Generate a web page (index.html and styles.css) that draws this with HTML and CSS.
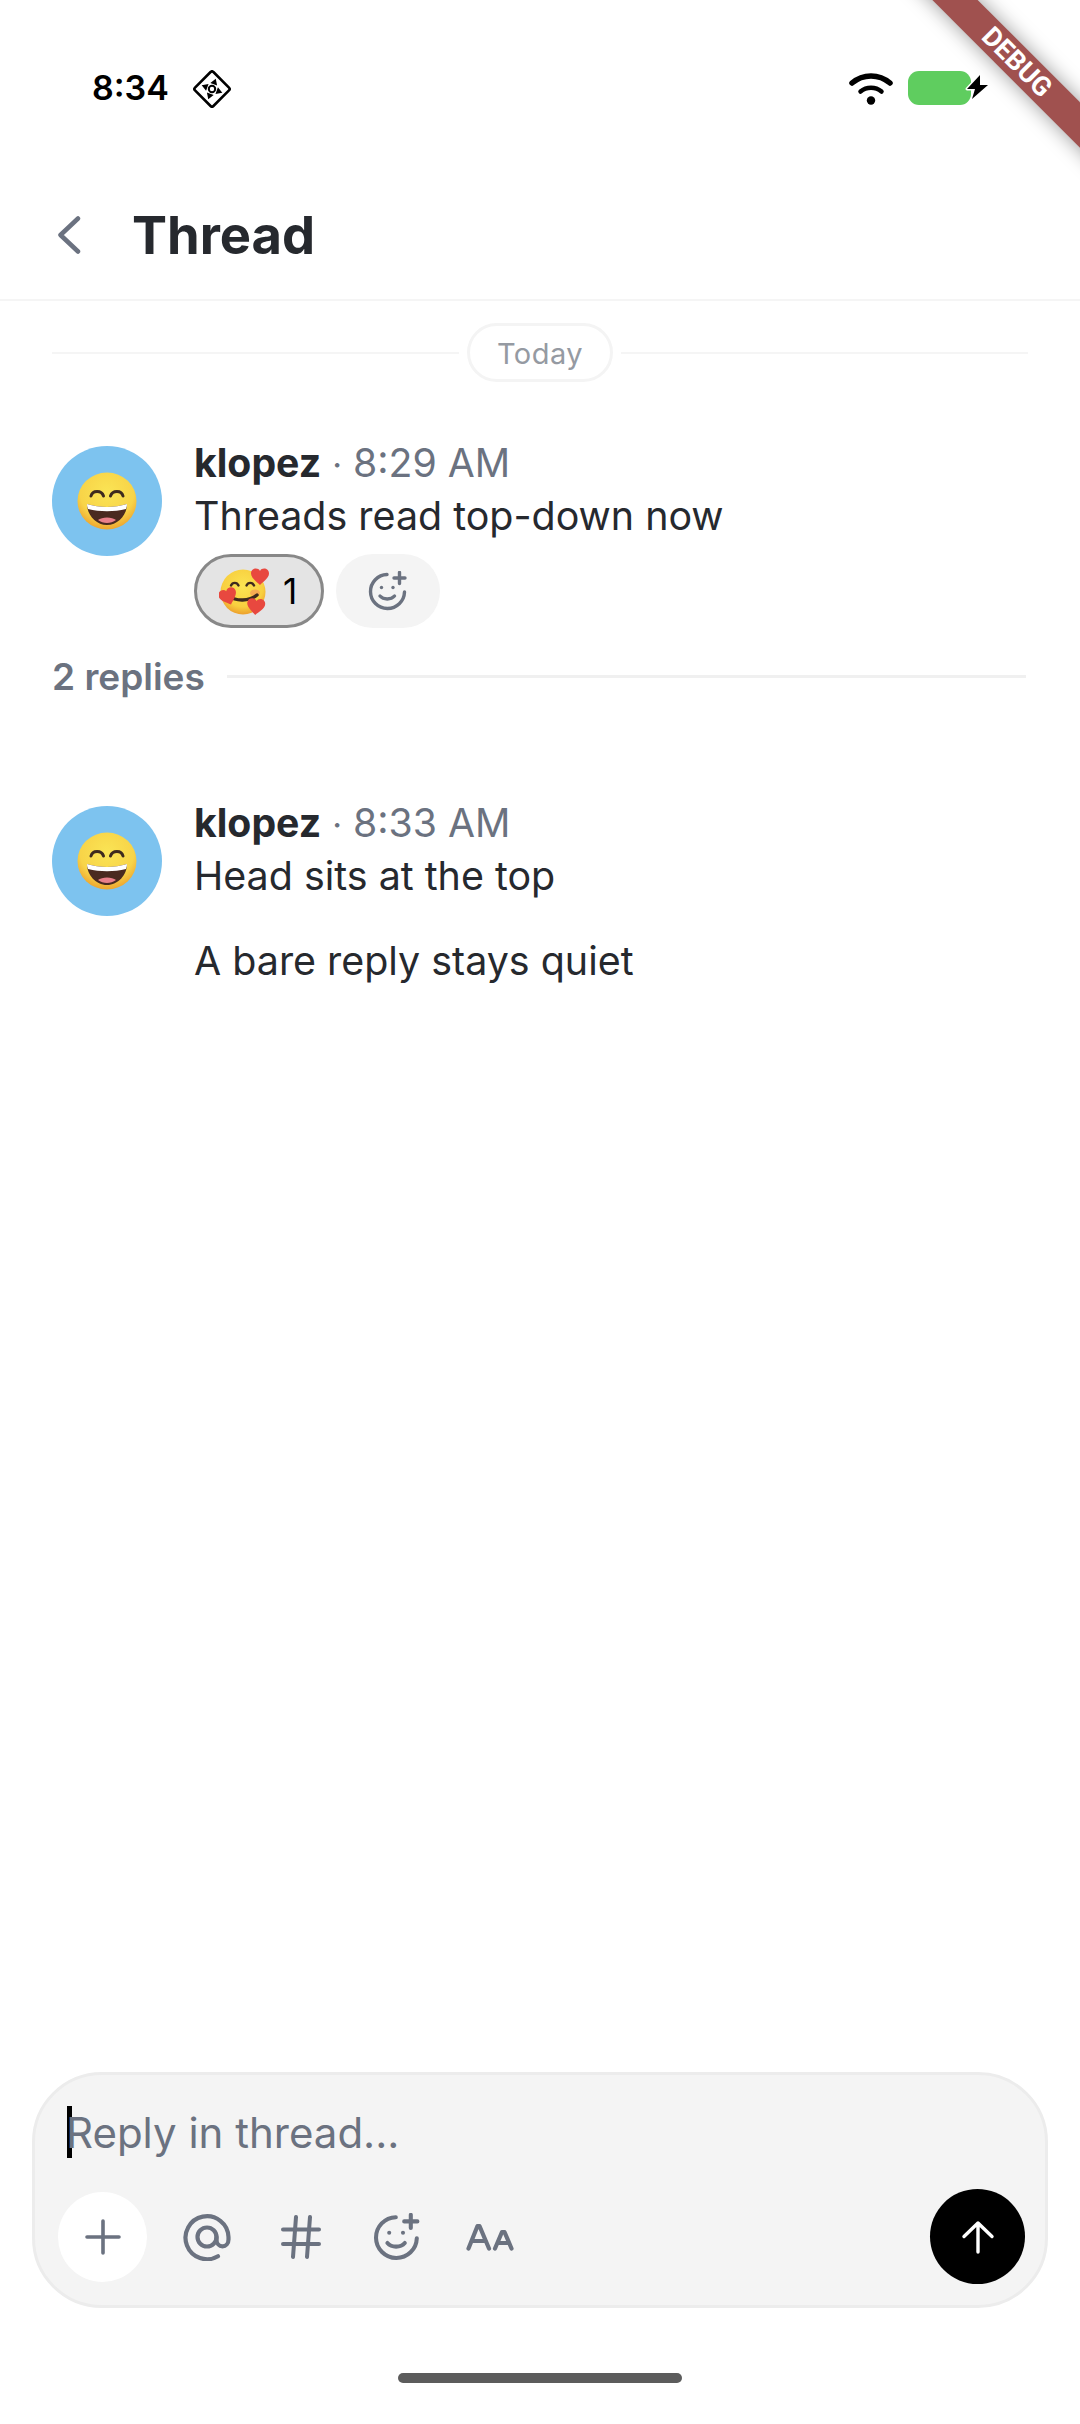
FILE: index.html
```html
<!DOCTYPE html>
<html>
    <head>
        <title>Thread</title>
        <link rel="stylesheet" href="styles.css">
    </head>
    <body>
        <div class="phone">
            <!-- Status bar -->
            <div class="status_bar">
                <span class="clock">8:34</span>
                <svg class="status_badge" viewBox="0 0 38 38" width="38" height="38">
                    <rect x="6" y="6" width="26" height="26" rx="2" transform="rotate(45 19 19)" fill="none" stroke="#000" stroke-width="2.600"/>
                    <path d="M19 8l3.600 6h-7.200zM19 30l-3.600-6h7.200zM8 19l6-3.600v7.200zM30 19l-6 3.600v-7.200z" fill="#000" transform="rotate(20 19 19)"/>
                    <circle cx="19" cy="19" r="3.200" fill="none" stroke="#000" stroke-width="2"/>
                </svg>
                <div class="status_right">
                    <svg class="wifi" viewBox="0 0 44 33" width="44" height="33">
                        <path d="M3 11C14 1.500 30 1.500 41 11" fill="none" stroke="#000" stroke-width="5.500" stroke-linecap="round"/>
                        <path d="M11.500 19.500C17.500 14.500 26.500 14.500 32.500 19.500" fill="none" stroke="#000" stroke-width="4.500" stroke-linecap="round"/>
                        <circle cx="22" cy="28.500" r="4.200" fill="#000"/>
                    </svg>
                    <div class="battery">
                        <svg class="bolt" viewBox="0 0 28 32" width="28" height="32">
                            <path d="M17 2L4 16h8l-3 10 16-14h-8z" fill="#000" stroke="#fff" stroke-width="3" paint-order="stroke" stroke-linejoin="round"/>
                        </svg>
                    </div>
                </div>
            </div>

            <!-- Header -->
            <div class="header">
                <svg class="back" viewBox="0 0 24 40" width="24" height="40">
                    <path d="M21 3.500L3.500 20 21 36.500" fill="none" stroke="#6b7280" stroke-width="4.500" stroke-linecap="round" stroke-linejoin="round"/>
                </svg>
                <h1 class="title">Thread</h1>
            </div>

            <!-- Messages -->
            <div class="thread">
                <div class="date_row">
                    <div class="date_line"></div>
                    <span class="date_pill">Today</span>
                    <div class="date_line"></div>
                </div>

                <div class="message">
                    <div class="avatar">
                        <svg viewBox="0 0 60 60" width="60" height="60">
                            <use href="#grin"/>
                        </svg>
                    </div>
                    <div class="message_body">
                        <p class="meta"><b class="author">klopez</b> <span class="dot">·</span> 8:29 AM</p>
                        <p class="text">Threads read top-down now</p>
                        <div class="reactions">
                            <div class="reaction reaction_active">
                                <svg viewBox="0 0 52 50" width="52" height="50">
                                    <defs>
                                        <radialGradient id="face2" cx="50%" cy="38%" r="60%">
                                            <stop offset="0" stop-color="#fbe452"/>
                                            <stop offset="0.75" stop-color="#f8cf3f"/>
                                            <stop offset="1" stop-color="#eea52f"/>
                                        </radialGradient>
                                        <path id="heart" d="M0 -5C-2 -9 -9 -8 -9 -2.500C-9 2 -3 6 0 9C3 6 9 2 9 -2.500C9 -8 2 -9 0 -5z" fill="#e8483f"/>
                                    </defs>
                                    <circle cx="24" cy="26" r="22.500" fill="url(#face2)"/>
                                    <ellipse cx="11" cy="27" rx="5" ry="3.500" fill="#f5a05a" opacity="0.6"/>
                                    <ellipse cx="36" cy="27" rx="5" ry="3.500" fill="#f5905a" opacity="0.6"/>
                                    <path d="M12 19.500c1.500-3.500 6-3.500 7.500 0M27.500 19.500c1.500-3.500 6-3.500 7.500 0" fill="none" stroke="#3e2a1e" stroke-width="2.400" stroke-linecap="round"/>
                                    <path d="M10 30c7 5.500 20 5.500 28-1" fill="none" stroke="#3e2a1e" stroke-width="3.400" stroke-linecap="round"/>
                                    <use href="#heart" transform="translate(41 10)"/>
                                    <use href="#heart" transform="translate(9 30) rotate(-20)"/>
                                    <use href="#heart" transform="translate(37 40) rotate(5)"/>
                                </svg>
                                <span class="count">1</span>
                            </div>
                            <div class="reaction reaction_add">
                                <svg viewBox="0 0 40 40" width="40" height="40">
                                    <use href="#smile_add"/>
                                </svg>
                            </div>
                        </div>
                    </div>
                </div>

                <div class="replies_row">
                    <span class="replies">2 replies</span>
                    <div class="replies_line"></div>
                </div>

                <div class="message message_reply">
                    <div class="avatar">
                        <svg viewBox="0 0 60 60" width="60" height="60">
                            <use href="#grin"/>
                        </svg>
                    </div>
                    <div class="message_body">
                        <p class="meta"><b class="author">klopez</b> <span class="dot">·</span> 8:33 AM</p>
                        <p class="text">Head sits at the top</p>
                        <p class="text text_next">A bare reply stays quiet</p>
                    </div>
                </div>
            </div>

            <!-- Composer -->
            <div class="composer">
                <div class="input_row">
                    <span class="cursor"></span>
                    <span class="placeholder">Reply in thread...</span>
                </div>
                <div class="tool_row">
                    <div class="plus_button">
                        <svg viewBox="0 0 36 36" width="36" height="36">
                            <path d="M18 2v32M2 18h32" fill="none" stroke="#6b7280" stroke-width="3.600" stroke-linecap="round"/>
                        </svg>
                    </div>
                    <svg class="tool tool_at" viewBox="0 0 48 48" width="48" height="48">
                        <path d="M35 43.200A21.500 21.500 0 1 1 45.500 24v2.500c0 4-2.700 6.800-6 6.800s-6-2.800-6-6.800V24" fill="none" stroke="#6b7280" stroke-width="4.200" stroke-linecap="round"/>
                        <circle cx="24" cy="24" r="9.500" fill="none" stroke="#6b7280" stroke-width="4.200"/>
                    </svg>
                    <svg class="tool tool_hash" viewBox="0 0 40 44" width="40" height="44">
                        <path d="M2 14.500h36M2 29h36M15 2l-3 40M29 2l-3 40" fill="none" stroke="#6b7280" stroke-width="4" stroke-linecap="round"/>
                    </svg>
                    <svg class="tool tool_smile" viewBox="0 0 40 40" width="48" height="48">
                        <use href="#smile_add"/>
                    </svg>
                    <svg class="tool tool_aa" viewBox="0 0 48 28" width="48" height="28">
                        <path d="M2.500 25.500L11.500 3h2L23 25.500M6.500 18h13" fill="none" stroke="#6b7280" stroke-width="4.200" stroke-linecap="round" stroke-linejoin="round"/>
                        <path d="M29 25.500L36 9h2.500l7 16.500M32.500 20h10" fill="none" stroke="#6b7280" stroke-width="4.200" stroke-linecap="round" stroke-linejoin="round"/>
                    </svg>
                    <div class="send_button">
                        <svg viewBox="0 0 34 34" width="34" height="34">
                            <path d="M17 32V3M3 16.500L17 3l14 13.500" fill="none" stroke="#fff" stroke-width="3.400" stroke-linecap="round" stroke-linejoin="round"/>
                        </svg>
                    </div>
                </div>
            </div>

            <div class="home_area">
                <div class="home_bar"></div>
            </div>

            <div class="debug_ribbon">DEBUG</div>
        </div>

        <!-- Shared drawings -->
        <svg class="defs" width="0" height="0">
            <defs>
                <radialGradient id="face" cx="50%" cy="35%" r="65%">
                    <stop offset="0" stop-color="#fae455"/>
                    <stop offset="0.7" stop-color="#f8d448"/>
                    <stop offset="1" stop-color="#eda52f"/>
                </radialGradient>
                <symbol id="grin" viewBox="0 0 60 60">
                    <ellipse cx="30" cy="30" rx="29.500" ry="28.500" fill="url(#face)"/>
                    <path d="M14 25c1.500-6 10.500-6 12.500 0M33.500 25c2-6 11-6 12.500 0" fill="none" stroke="#3e2a1e" stroke-width="3" stroke-linecap="round"/>
                    <path d="M10 33c13 4 27 4 40 0c0 11-9 21-20 21S10 44 10 33z" fill="#4a2a20"/>
                    <path d="M10 33c13 4 27 4 40 0c0 2-.5 3.500-1 5-12 3-26 3-38 0-.5-1.500-1-3-1-5z" fill="#fff"/>
                    <path d="M21 49c4-3.500 14-3.500 18 0-5 4-13 4-18 0z" fill="#e9808a"/>
                </symbol>
                <symbol id="smile_add" viewBox="0 0 40 40">
                    <path d="M19 3.500A17 17 0 1 0 36.500 21" fill="none" stroke="#6b7280" stroke-width="3.400" stroke-linecap="round"/>
                    <path d="M31.500 1.500v11M26 7h11" fill="none" stroke="#6b7280" stroke-width="3.400" stroke-linecap="round"/>
                    <circle cx="13.500" cy="16.500" r="1.700" fill="#6b7280"/>
                    <circle cx="25" cy="16.500" r="1.700" fill="#6b7280"/>
                    <path d="M12 25c3.500 4 11 4 14.500 0" fill="none" stroke="#6b7280" stroke-width="3.400" stroke-linecap="round"/>
                </symbol>
            </defs>
        </svg>
    </body>
</html>
```

FILE: styles.css
```css
*{
    box-sizing: border-box;
}
html, body{
    margin: 0;
    padding: 0;
    background: #fff;
}
p, h1{
    margin: 0;
}
.defs{
    display: block;
    height: 0;
}
.phone{
    position: relative;
    width: 1080px;
    height: 2424px;
    overflow: hidden;
    display: flex;
    flex-direction: column;
    font-family: Inter, "Noto Sans", sans-serif;
    color: #26292e;
}

/* Status bar */
.status_bar{
    height: 171px;
    flex: none;
    display: flex;
    align-items: flex-start;
    padding: 70px 109px 0 92px;
}
.clock{
    font-size: 34px;
    font-weight: 600;
    line-height: 36px;
    color: #000;
}
.status_badge{
    margin-left: 24px;
}
.status_right{
    margin-left: auto;
    display: flex;
    gap: 15px;
}
.wifi{
    margin-top: 2px;
}
.battery{
    position: relative;
    width: 63px;
    height: 34px;
    margin-top: 1px;
    background: #5fcd5f;
    border-radius: 11px;
}
.bolt{
    position: absolute;
    left: 55px;
    top: 2px;
}

/* Header */
.header{
    height: 130px;
    flex: none;
    display: flex;
    align-items: center;
    padding-left: 57px;
    border-bottom: 2px solid #f5f5f5;
}
.title{
    margin-left: 51px;
    font-size: 52.500px;
    font-weight: 700;
    line-height: 60px;
}

/* Thread */
.thread{
    flex: 1;
    padding: 22px 52px 0;
}
.date_row{
    display: flex;
    align-items: center;
    gap: 8px;
}
.date_line{
    flex: 1;
    height: 2px;
    background: #f5f5f5;
}
.date_pill{
    height: 59px;
    padding: 2px 27px 0;
    display: flex;
    align-items: center;
    font-size: 29px;
    letter-spacing: 0.5px;
    color: #959aa2;
    border: 3px solid #f4f4f4;
    border-radius: 30px;
}
.message{
    display: flex;
    gap: 32px;
    margin-top: 55px;
}
.message_reply{
    margin-top: 99px;
}
.avatar{
    flex: none;
    width: 110px;
    height: 110px;
    margin-top: 9px;
    border-radius: 50%;
    background: #7dc3ef;
    display: flex;
    align-items: center;
    justify-content: center;
}
.message_body{
    flex: 1;
}
.meta{
    font-size: 39.200px;
    line-height: 51px;
    color: #6b7280;
}
.author{
    font-weight: 700;
    color: #26292e;
}
.dot{
    font-size: 34px;
}
.text{
    font-size: 39.400px;
    line-height: 52px;
}
.text_next{
    margin-top: 33px;
}
.reactions{
    display: flex;
    gap: 12px;
    margin-top: 12px;
}
.reaction{
    height: 74px;
    border-radius: 37px;
    display: flex;
    align-items: center;
    justify-content: center;
}
.reaction_active{
    width: 130px;
    padding-left: 22px;
    justify-content: flex-start;
    gap: 12px;
    background: #e4e4e4;
    border: 3px solid #888;
}
.reaction_add{
    width: 104px;
    background: #f4f4f4;
}
.count{
    font-size: 35px;
    color: #000;
}
.replies_row{
    display: flex;
    align-items: center;
    gap: 22px;
    height: 44px;
    margin-top: 26px;
}
.replies{
    font-size: 37px;
    font-weight: 600;
    color: #6b7280;
}
.replies_line{
    flex: 1;
    height: 3px;
    background: #f0f0f0;
    margin-right: 2px;
}

/* Composer */
.composer{
    flex: none;
    height: 236px;
    margin: 0 32px;
    padding: 30px 20px 0 23px;
    background: #f4f4f4;
    border: 3px solid #ececec;
    border-radius: 70px;
}
.input_row{
    display: flex;
    align-items: center;
    height: 54px;
    padding-left: 9px;
}
.cursor{
    flex: none;
    width: 5px;
    height: 52px;
    background: #000;
}
.placeholder{
    margin-left: -6px;
    font-size: 42px;
    color: #6b7280;
}
.tool_row{
    display: flex;
    align-items: center;
    margin-top: 30px;
}
.plus_button{
    flex: none;
    width: 89px;
    height: 90px;
    border-radius: 50%;
    background: #fff;
    display: flex;
    align-items: center;
    justify-content: center;
}
.tool{
    flex: none;
}
.tool_at{
    margin-left: 36px;
}
.tool_hash{
    margin-left: 50px;
}
.tool_smile{
    margin-left: 52px;
}
.tool_aa{
    margin-left: 45px;
}
.send_button{
    flex: none;
    width: 95px;
    height: 95px;
    margin-left: auto;
    border-radius: 50%;
    background: #000;
    display: flex;
    align-items: center;
    justify-content: center;
}

/* Home indicator */
.home_area{
    flex: none;
    height: 116px;
    display: flex;
    justify-content: center;
    padding-top: 65px;
}
.home_bar{
    width: 284px;
    height: 10px;
    border-radius: 5px;
    background: #5c5c5c;
}

/* Debug banner */
.debug_ribbon{
    position: absolute;
    left: 817px;
    top: 46px;
    width: 400px;
    height: 32px;
    transform: rotate(45deg);
    background: #a0514f;
    color: #fff;
    font-family: Roboto, sans-serif;
    font-size: 27px;
    font-weight: 700;
    line-height: 32px;
    text-align: center;
    box-shadow: 0 0 20px rgba(0, 0, 0, 0.4);
}
```
